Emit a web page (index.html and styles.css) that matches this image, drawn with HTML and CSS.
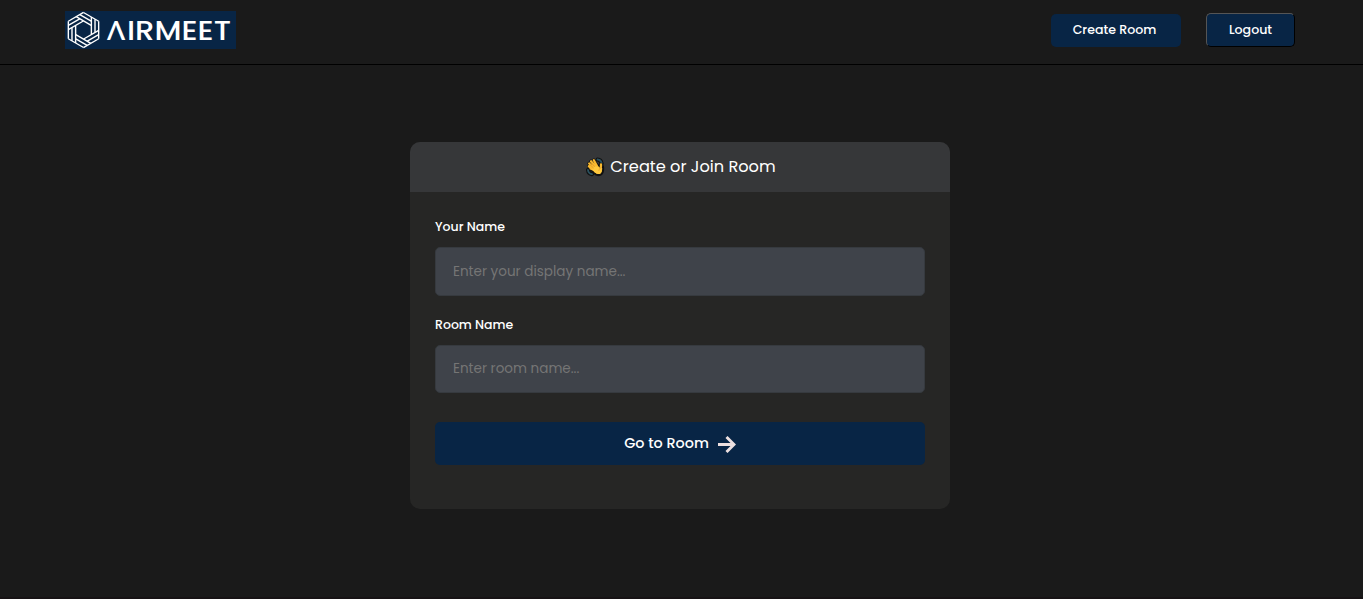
FILE: index.html
```html
<!DOCTYPE html>
<html lang="en">
<head>
<meta charset="utf-8">
<title>Airmeet</title>
<link rel="stylesheet" href="styles.css">
</head>
<body>
<header class="nav">
  <a class="logo" aria-label="AIRMEET">
    <svg width="171" height="38" viewBox="0 0 171 38">
      <defs>
        <path id="blade" fill="none" stroke="#fff" stroke-width="1.400" d="M0-17.5 15.2-8.75M-3.65-15.4 7.7-8.85M-7.3-13.3 7.7-4.65"/>
      </defs>
      <g transform="translate(18.5 19)">
        <use href="#blade"/><use href="#blade" transform="rotate(60)"/><use href="#blade" transform="rotate(120)"/>
        <use href="#blade" transform="rotate(180)"/><use href="#blade" transform="rotate(240)"/><use href="#blade" transform="rotate(300)"/>
      </g>
      <text class="wordmark" y="29"><tspan class="peak" x="42">Λ</tspan><tspan x="62" textLength="104" lengthAdjust="spacingAndGlyphs">IRMEET</tspan></text>
    </svg>
  </a>
  <nav class="actions">
    <button class="btn create">Create Room</button>
    <button class="btn logout">Logout</button>
  </nav>
</header>
<main class="page">
  <section class="card">
    <h1 class="card-head">
      <svg class="wave" width="19" height="20" viewBox="0 0 19 20">
        <g fill="none" stroke-linecap="round">
          <path d="M11.5 2.5q3.500 .2 4.200 4M2 13q.3 3.500 4 4.200" stroke="#111" stroke-width="4"/>
          <path d="M11.5 2.500q3.500 .2 4.200 4M2 13q.3 3.500 4 4.200" stroke="#2b5260" stroke-width="1.800"/>
          <path d="M9.500 10 5 4.300M8 11 3.200 6.500M7.500 12.500 2.800 9.300M11 9 7.800 3.300M8 13l-3.500-1.500M14.500 12l.4-4.500" stroke="#111" stroke-width="3.600"/>
          <path d="M8 8.500q4-2 6.500 1.500l2.500-.5q.8 6-2 8-4 1.800-7-1.500L5 12.500z" fill="#ffc83d" stroke="#111" stroke-width="2"/>
          <path d="M9.500 10 5 4.300M8 11 3.200 6.500M7.500 12.500 2.800 9.300M11 9 7.800 3.300M8 13l-3.500-1.500M14.800 12l.2-4.500" stroke="#f9b92f" stroke-width="2.300"/>
          <path d="M8 9.500q4-1 6 2l1.800-1q.2 5-1.800 6.200-3 1-5.500-1.500L6 12.500z" fill="#ffc83d"/>
          <path d="M8.500 9.500 5.200 5.600M7.500 11 4.300 8M12.800 13.500q0-2.500 2.400-3" stroke="#d7922b" stroke-width=".6"/>
        </g>
      </svg>
      <span class="title">Create or Join Room</span>
    </h1>
    <form class="form">
      <label class="label" for="name">Your Name</label>
      <input class="field" id="name" placeholder="Enter your display name...">
      <label class="label" for="room">Room Name</label>
      <input class="field roomname" id="room" placeholder="Enter room name...">
      <button class="go" type="button"><span>Go to Room</span>
        <svg width="18" height="17" viewBox="0 0 18 17"><path d="M0 8.500h15M8.500 1l7.500 7.500L8.500 16" fill="none" stroke="#ede0e0" stroke-width="2.900"/></svg>
      </button>
    </form>
  </section>
</main>
</body>
</html>
```
FILE: styles.css
```css
* { box-sizing: border-box; }
body { margin: 0; height: 599px; overflow: hidden; display: flex; flex-direction: column; background: #1a1a1a; color: #fff; font-family: Poppins, Inter, sans-serif; }
.nav { height: 65px; flex: none; border-bottom: 1px solid #000; display: flex; justify-content: space-between; align-items: flex-start; padding: 11px 68px 0 65px; }
.logo { width: 171px; height: 38px; background: #082545; }
.logo svg { display: block; }
.wordmark { font: 500 27px Poppins, Inter, sans-serif; fill: #fff; }
.peak { font: 600 26.5px Lato, sans-serif; }
.actions { display: flex; gap: 25px; padding-top: 2px; }
.btn { font: 500 12.6px Poppins, Inter, sans-serif; color: #fff; background: #082545; border-radius: 5px; padding: 0; }
.create { width: 130px; height: 33px; border: 0; margin-top: 1px; padding: 0 3px 2px 0; }
.logout { width: 89px; height: 34px; border: 1px solid #000; border-top-color: #555; border-left-color: #555; }
.page { flex: 1; padding: 77px 3px 0 0; border-bottom: 2px solid #171315; }
.card { width: 540px; height: 367px; margin: 0 auto; border-radius: 10px; overflow: hidden; background: #262625; }
.card-head { margin: 0; height: 50px; background: #363739; display: flex; justify-content: center; align-items: center; gap: 5px; padding-left: 2px; font-size: 16.2px; font-weight: 400; }
.title { padding-bottom: 1px; }
.wave { margin-bottom: 1px; }
.form { padding: 25.4px 25px 0; display: flex; flex-direction: column; align-items: stretch; }
.label { font-size: 12.5px; font-weight: 500; line-height: 20px; }
.field { height: 49px; margin: 10px 0 18.6px; border: 1px solid #363a3f; border-radius: 5px; background: #3f434a; color: #fff; padding: 0 17px; font: 400 13.55px Poppins, Inter, sans-serif; }
.field::placeholder { color: #757575; opacity: 1; }
.field.roomname { height: 48.5px; margin-bottom: 28.5px; padding-bottom: 1px; }
.go { height: 43px; border: 0; border-radius: 5px; background: #082545; color: #fff; display: flex; align-items: center; justify-content: center; gap: 9px; font: 500 14.4px Poppins, Inter, sans-serif; padding: 0; }
.go svg { margin-top: 2px; }
```
